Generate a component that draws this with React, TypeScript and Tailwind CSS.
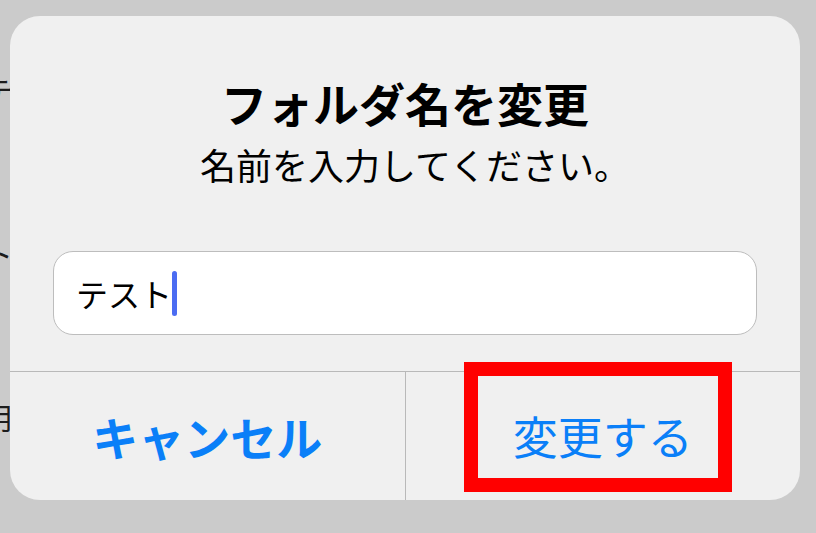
export default function App() {
  return (
    <div className="relative w-[816px] h-[533px] overflow-hidden bg-[#cbcbcb] font-['Noto_Sans_CJK_JP',sans-serif] text-[#1c1c1c]">
      {/* list behind the alert, mostly hidden */}
      <div className="flex flex-col -ml-[17px] text-[30px] leading-[30px]">
        <div className="mt-[75px]">テスト</div>
        <div className="mt-[133px]">ト</div>
        <div className="mt-[133px]">用</div>
      </div>

      <div className="absolute left-[10px] top-[16px] w-[790px] h-[484px] rounded-[30px] bg-[#f0f0f0] flex flex-col">
        <div className="pt-[63px] text-center text-[46px] leading-[46px] font-bold text-black">フォルダ名を変更</div>
        <div className="mt-[21px] pl-[20px] text-center text-[36px] leading-[36px] text-black">名前を入力してください。</div>

        <div className="mt-[69px] mx-[43px] h-[84px] rounded-[20px] border border-[#bdbdbd] bg-white flex items-center pl-[22px]">
          <span className="text-[32px] leading-[32px] text-black">テスト</span>
          <span className="w-[5px] h-[45px] rounded-full bg-[#4b6cf2]" />
        </div>

        <div className="mt-[36px] flex flex-1 border-t border-[#b9b9b9]">
          <div className="flex-1 flex items-center justify-center border-r border-[#b9b9b9] text-[46px] font-bold text-[#0a7ff8]">
            キャンセル
          </div>
          <div className="flex-1 flex items-center justify-center text-[45px] text-[#0a7ff8]">
            変更する
          </div>
        </div>
      </div>

      <div className="absolute left-[464px] top-[362px] w-[268px] h-[130px] border-[14px] border-[#ff0000]" />
    </div>
  )
}
